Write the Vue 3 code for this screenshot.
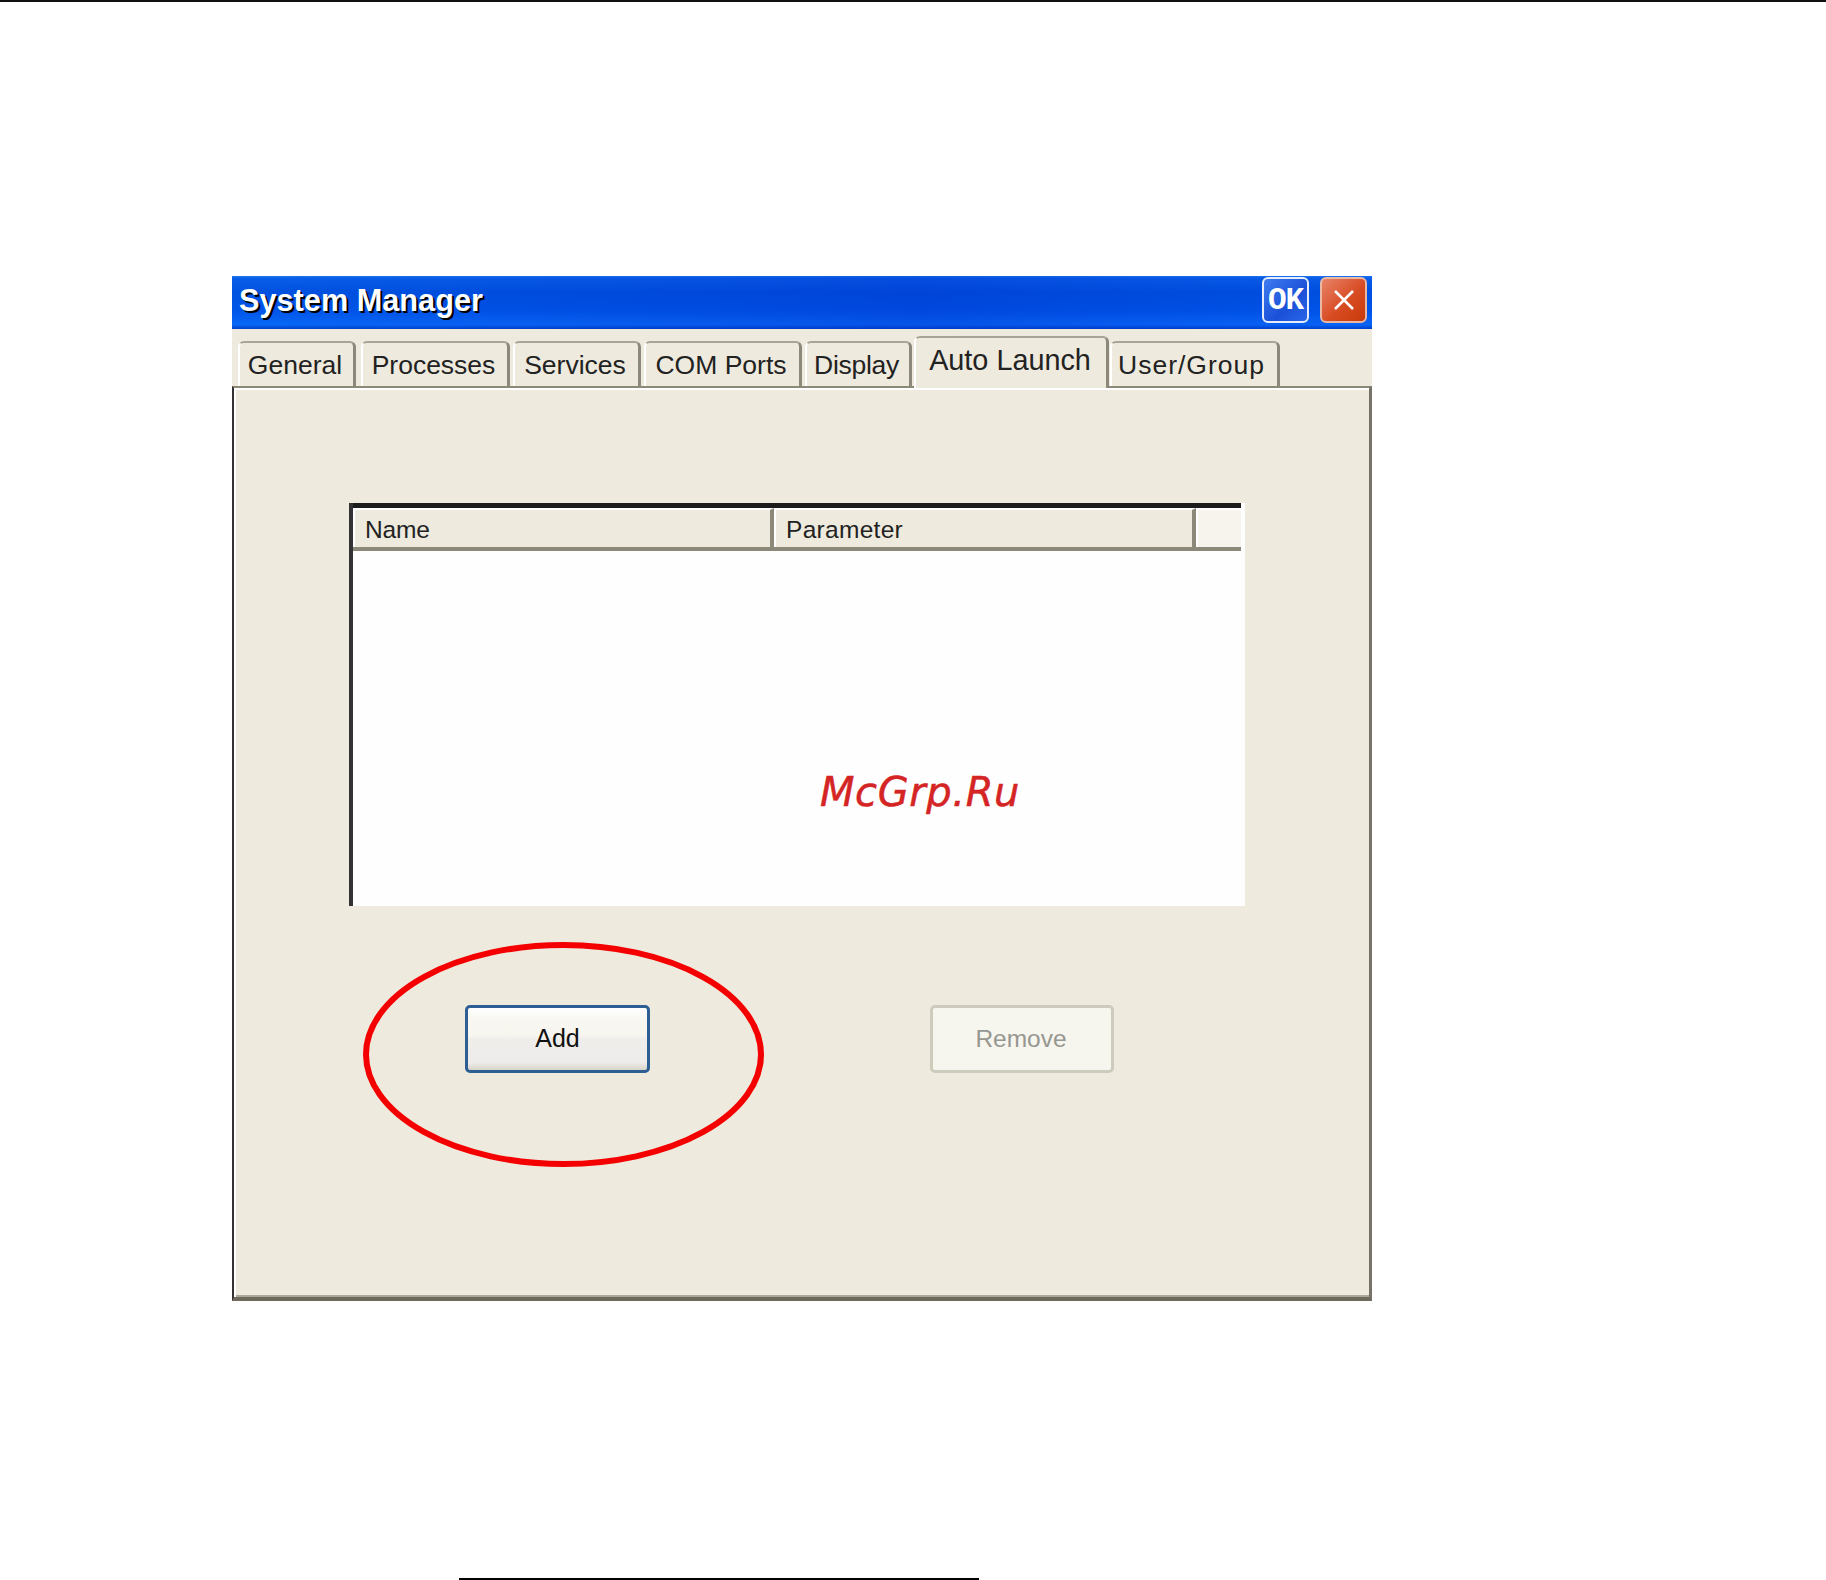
<script setup>
const tabs = [
  { label: 'General', width: 118, gap: 5, mod: '' },
  { label: 'Processes', width: 149, gap: 3, mod: '' },
  { label: 'Services', width: 128, gap: 3, mod: '' },
  { label: 'COM Ports', width: 158, gap: 3, mod: '' },
  { label: 'Display', width: 107, gap: 2, mod: 'tight' },
  { label: 'Auto Launch', width: 195, gap: 1, mod: 'active' },
  { label: 'User/Group', width: 170, gap: 0, mod: 'wide' }
]
</script>

<template>
  <div class="page">
    <div class="top-rule"></div>
    <div class="window">
      <header class="titlebar">
        <span class="title">System Manager</span>
        <div class="controls">
          <button class="ctl ok">OK</button>
          <button class="ctl close" aria-label="Close">
            <svg width="22" height="22" viewBox="0 0 22 22">
              <path d="M2 2 L20 20 M20 2 L2 20" stroke="#fff" stroke-width="2.5" fill="none" />
            </svg>
          </button>
        </div>
      </header>

      <nav class="tabs">
        <div
          v-for="t in tabs"
          :key="t.label"
          class="tab"
          :class="t.mod"
          :style="{ width: t.width + 'px', marginRight: t.gap + 'px' }"
        >{{ t.label }}</div>
      </nav>

      <section class="panel">
        <div class="list">
          <div class="list-head">
            <div class="col col-name">Name</div>
            <div class="col col-param">Parameter</div>
            <div class="col col-rest"></div>
          </div>
        </div>
        <div class="actions">
          <button class="btn add">Add</button>
          <button class="btn remove" disabled>Remove</button>
        </div>
        <span class="mark">McGrp.Ru</span>
        <svg class="ring" width="401" height="225" viewBox="0 0 401 225">
          <ellipse cx="200.5" cy="112.5" rx="197.5" ry="109.5" fill="none" stroke="#f40000" stroke-width="6" />
        </svg>
      </section>
    </div>
    <div class="foot-rule"></div>
  </div>
</template>

<style>
html, body { margin: 0; background: #fff; }
</style>

<style scoped>
.page {
  width: 1826px;
  height: 1580px;
  overflow: hidden;
  font-family: "Liberation Sans", Arial, sans-serif;
  color: #222;
}
.top-rule { height: 2px; background: #111; }
.window {
  width: 1140px;
  height: 1025px;
  margin: 274px 0 0 232px;
  display: flex;
  flex-direction: column;
  background: #eeeade;
}
.titlebar {
  height: 53px;
  flex: none;
  box-sizing: border-box;
  display: flex;
  align-items: center;
  justify-content: space-between;
  padding: 0 5px 5px 7px;
  background:
    linear-gradient(90deg, rgba(0,70,220,.1), rgba(0,40,200,.35) 60%, rgba(0,60,220,.15)),
    linear-gradient(180deg, #1f80f5 0, #0a62ea 4%, #0053e0 30%, #0058ea 65%, #0a6cfa 92%, #0040c8 100%);
}
.title {
  padding-top: 2px;
  color: #fff;
  font-size: 30.7px;
  font-weight: 700;
  text-shadow: 2px 2px 0 #000;
}
.controls { display: flex; gap: 11px; }
.ctl {
  width: 47px;
  height: 46px;
  box-sizing: border-box;
  padding: 0;
  display: flex;
  align-items: center;
  justify-content: center;
  border: 2px solid #e6ecf8;
  border-radius: 6px;
}
.ok {
  background: linear-gradient(135deg, #3f7cf0, #1a50d8 60%, #2a66e8);
  color: #fff;
  font-family: "Liberation Mono", monospace;
  font-weight: 700;
  font-size: 31px;
  letter-spacing: -1px;
}
.close {
  border-color: #e8b8a4;
  background: linear-gradient(135deg, #e88468, #d84c24 55%, #c83a08);
}
.tabs {
  flex: none;
  height: 57px;
  box-sizing: border-box;
  display: flex;
  align-items: flex-end;
  padding-left: 6px;
}
.tab {
  height: 45px;
  box-sizing: border-box;
  padding: 2px 3px 0 0;
  display: flex;
  align-items: center;
  justify-content: center;
  font-size: 26.5px;
  white-space: nowrap;
  background: #eeeade;
  border-top: 2px solid #a8a496;
  border-left: 2px solid #fff;
  border-right: 3px solid #8c887a;
  border-radius: 6px 6px 0 0;
}
.tab.active {
  height: 52px;
  margin-bottom: -2px;
  position: relative;
  z-index: 1;
  padding: 0 2px 6px 0;
  font-size: 28.8px;
}
.tab.wide { letter-spacing: 1px; padding-right: 6px; }
.tab.tight { letter-spacing: -.3px; }
.panel {
  flex: 1;
  position: relative;
  box-sizing: border-box;
  padding: 115px 0 0 117px;
  background: #eeeade;
  border-top: 2px solid #8c887a;
  border-left: 2px solid #333;
  border-right: 3px solid #77736a;
  border-bottom: 4px solid #6e6a5e;
  box-shadow: inset 2px 2px 0 #fff, inset 0 -2px 0 #aca899;
}
.list {
  width: 896px;
  height: 403px;
  box-sizing: border-box;
  background: #fefefe;
  border-left: 4px solid #333;
  margin-left: -2px;
}
.list-head {
  display: flex;
  height: 48px;
  width: 888px;
  box-sizing: border-box;
  border-top: 5px solid #1c1c1c;
  border-bottom: 4px solid #8c887a;
  background: #eeeade;
}
.col {
  box-sizing: border-box;
  height: 100%;
  padding: 3px 0 0 10px;
  font-size: 24.5px;
  line-height: 33px;
  border-top: 2px solid #fff;
  border-left: 2px solid #fff;
  border-right: 4px solid #8c887a;
}
.col-name { width: 421px; letter-spacing: -.2px; }
.col-param { width: 422px; letter-spacing: .3px; }
.col-rest { flex: 1; border-right: 0; background: #f6f4ec; }
.actions {
  display: flex;
  gap: 280px;
  padding: 99px 0 0 114px;
}
.btn {
  width: 185px;
  height: 68px;
  box-sizing: border-box;
  font-family: inherit;
  padding: 0;
  border-radius: 5px;
}
.add {
  padding-bottom: 2px;
  font-size: 25px;
  color: #111;
  border: 3px solid #2d5f94;
  background: linear-gradient(180deg, #fff 0, #f8f7f1 18%, #f6f5ee 45%, #efeeeb 50%, #eeecea 88%, #d8d4c8 100%);
}
.remove {
  width: 184px;
  padding-right: 2px;
  font-size: 24.5px;
  color: #979791;
  border: 3px solid #cdcbbb;
  background: #f6f5ee;
}
.mark {
  position: absolute;
  left: 586px;
  top: 382px;
  color: #d42424;
  font-family: "DejaVu Sans", sans-serif;
  font-style: italic;
  font-size: 40px;
  letter-spacing: .6px;
  line-height: 44px;
  -webkit-text-stroke: .5px #d42424;
}
.ring {
  position: absolute;
  left: 129px;
  top: 554px;
}
.foot-rule {
  width: 520px;
  height: 2px;
  margin: 277px 0 0 459px;
  background: #000;
}
</style>
